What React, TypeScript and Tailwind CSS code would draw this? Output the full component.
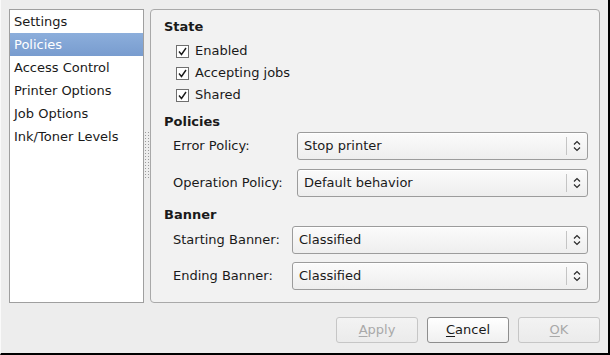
const font = { fontFamily: '"DejaVu Sans", "Liberation Sans", sans-serif' };

const sections = [
  "Settings",
  "Policies",
  "Access Control",
  "Printer Options",
  "Job Options",
  "Ink/Toner Levels",
];

function Check({ label }: { label: string }) {
  return (
    <div className="flex h-[22px] items-center pl-[12px]">
      <span className="flex h-[13px] w-[13px] items-center justify-center border border-[#6f6f6f] bg-white">
        <svg width="9" height="9" viewBox="0 0 9 9">
          <path d="M1 4.5 L3.5 7.5 L8 1" fill="none" stroke="#1a1a1a" strokeWidth="1.4" />
        </svg>
      </span>
      <span className="ml-[6px] text-[#1a1a1a]">{label}</span>
    </div>
  );
}

function Combo({ value }: { value: string }) {
  return (
    <div className="flex h-[28px] flex-1 items-center rounded-[3px] border border-[#9c9c9c] bg-gradient-to-b from-[#fbfbfb] to-[#eeeeee] shadow-[inset_0_1px_0_#ffffff]">
      <span className="flex-1 pl-[6px] text-[#1a1a1a]">{value}</span>
      <span className="h-[18px] w-px bg-[#c4c4c4]" />
      <span className="flex w-[20px] justify-center">
        <svg width="8" height="12" viewBox="0 0 8 12">
          <path d="M1 4.5 L4 1.5 L7 4.5 M1 7.5 L4 10.5 L7 7.5" fill="none" stroke="#2a2a2a" strokeWidth="1.2" />
        </svg>
      </span>
    </div>
  );
}

function Field({ label, value, labelW }: { label: string; value: string; labelW: string }) {
  return (
    <div className="flex items-center pl-[9px]">
      <span className={`${labelW} text-[#1a1a1a]`}>{label}</span>
      <Combo value={value} />
    </div>
  );
}

function Btn({ label, u, disabled }: { label: string; u: number; disabled?: boolean }) {
  return (
    <button
      className={`h-[26px] w-[82px] rounded-[3px] border text-[13px] ${
        disabled
          ? "border-[#c6c6c6] bg-gradient-to-b from-[#f3f3f3] to-[#ebebeb] text-[#a9a9a9]"
          : "border-[#8e8e8e] bg-gradient-to-b from-[#ffffff] to-[#f0f0f0] text-[#1a1a1a]"
      }`}
      style={font}
    >
      {label.slice(0, u)}
      <span className="underline underline-offset-2">{label[u]}</span>
      {label.slice(u + 1)}
    </button>
  );
}

export default function App() {
  return (
    <div
      className="box-border flex h-[355px] w-[610px] flex-col border-b-2 border-l border-r-2 border-b-black border-l-[#fafafa] border-r-black bg-[#ededed] pl-[8px] pr-[8px] pt-[9px] text-[13px]"
      style={font}
    >
      <div className="flex h-[294px]">
        <div className="w-[135px] border border-[#9f9f9f] bg-white">
          {sections.map((s) => (
            <div
              key={s}
              className={`flex h-[23px] items-center pl-[4px] ${
                s === "Policies"
                  ? "bg-gradient-to-b from-[#8caedb] to-[#789ccf] text-white"
                  : "text-[#1a1a1a]"
              }`}
            >
              {s}
            </div>
          ))}
        </div>
        <div className="flex w-[6px] items-center justify-center">
          <svg width="4" height="48" viewBox="0 0 4 48">
            <defs>
              <pattern id="dots" width="3" height="3" patternUnits="userSpaceOnUse">
                <rect x="0" y="0" width="1" height="1" fill="#9a9a9a" />
              </pattern>
            </defs>
            <rect width="4" height="48" fill="url(#dots)" />
          </svg>
        </div>
        <div className="flex flex-1 flex-col rounded-[4px] border border-[#a9a9a9] bg-[#f2f2f2] pl-[13px] pr-[11px] pt-[7px]">
          <div className="flex h-[20px] items-center font-bold text-[#1a1a1a]">State</div>
          <div className="mt-[3px] flex flex-col">
            <Check label="Enabled" />
            <Check label="Accepting jobs" />
            <Check label="Shared" />
          </div>
          <div className="mt-[6px] flex h-[20px] items-center font-bold text-[#1a1a1a]">Policies</div>
          <div className="flex flex-col gap-[9px]">
            <Field label="Error Policy:" value="Stop printer" labelW="w-[124px]" />
            <Field label="Operation Policy:" value="Default behavior" labelW="w-[124px]" />
          </div>
          <div className="mt-[8px] flex h-[20px] items-center font-bold text-[#1a1a1a]">Banner</div>
          <div className="mt-[1px] flex flex-col gap-[8px]">
            <Field label="Starting Banner:" value="Classified" labelW="w-[119px]" />
            <Field label="Ending Banner:" value="Classified" labelW="w-[119px]" />
          </div>
        </div>
      </div>
      <div className="mt-[14px] flex justify-end gap-[9px]">
        <Btn label="Apply" u={0} disabled />
        <Btn label="Cancel" u={0} />
        <Btn label="OK" u={0} disabled />
      </div>
    </div>
  );
}
